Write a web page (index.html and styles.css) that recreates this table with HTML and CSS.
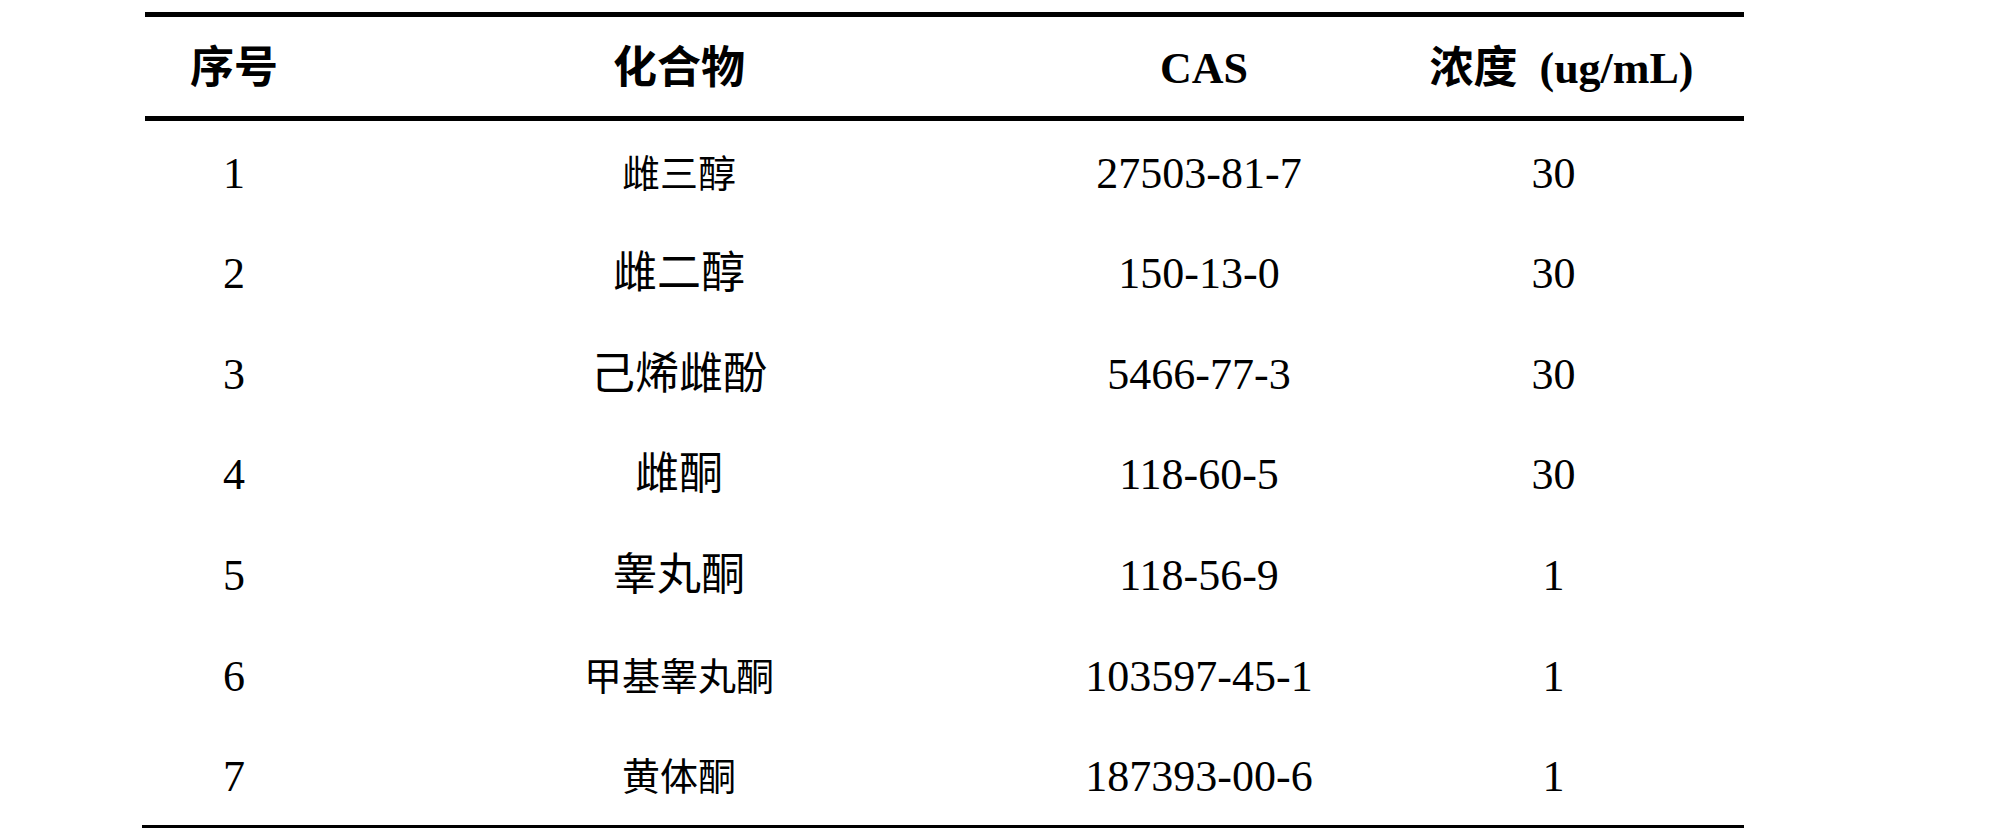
FILE: index.html
```html
<!DOCTYPE html>
<html lang="zh">
<head>
<meta charset="utf-8">
<link rel="stylesheet" href="styles.css">
</head>
<body>
<div class="table">
  <div class="rule-thick"></div>
  <div class="row head">
    <div class="c1">序号</div>
    <div class="c2">化合物</div>
    <div class="c3">CAS</div>
    <div class="c4">浓度<span class="unit">(ug/mL)</span></div>
  </div>
  <div class="rule-thick"></div>
  <div class="body">
    <div class="row"><div class="c1">1</div><div class="c2 cn-s">雌三醇</div><div class="c3">27503-81-7</div><div class="c4">30</div></div>
    <div class="row"><div class="c1">2</div><div class="c2 cn">雌二醇</div><div class="c3">150-13-0</div><div class="c4">30</div></div>
    <div class="row"><div class="c1">3</div><div class="c2 cn">己烯雌酚</div><div class="c3">5466-77-3</div><div class="c4">30</div></div>
    <div class="row"><div class="c1">4</div><div class="c2 cn">雌酮</div><div class="c3">118-60-5</div><div class="c4">30</div></div>
    <div class="row"><div class="c1">5</div><div class="c2 cn">睾丸酮</div><div class="c3">118-56-9</div><div class="c4">1</div></div>
    <div class="row"><div class="c1">6</div><div class="c2 cn-s">甲基睾丸酮</div><div class="c3">103597-45-1</div><div class="c4">1</div></div>
    <div class="row"><div class="c1">7</div><div class="c2 cn-s">黄体酮</div><div class="c3">187393-00-6</div><div class="c4">1</div></div>
  </div>
  <div class="rule-thin"></div>
</div>
</body>
</html>
```
FILE: styles.css
```css
html, body {
  margin: 0;
  padding: 0;
  background: #fff;
}
body {
  font-family: "Liberation Serif", "Noto Sans CJK SC", serif;
  color: #000;
}
.table {
  margin-left: 145px;
  padding-top: 12px;
  width: 1599px;
}
.rule-thick {
  height: 5px;
  background: #000;
}
.rule-thin {
  height: 3px;
  background: #000;
  margin-left: -3px;
  width: 1602px;
}
.row {
  display: grid;
  grid-template-columns: 178px 712px 328px 381px;
  align-items: center;
  height: 100.57px;
  font-size: 44px;
  line-height: 1;
}
.row > div {
  text-align: center;
  white-space: nowrap;
  padding-top: 5px;
}
.head {
  height: 99px;
  font-weight: bold;
}
.head .c3 {
  padding-left: 10px;
}
.head .c4 {
  padding-left: 16px;
}
.unit {
  margin-left: 22px;
}
.cn {
  font-size: 44px;
}
.cn-s {
  font-size: 38px;
}
```
